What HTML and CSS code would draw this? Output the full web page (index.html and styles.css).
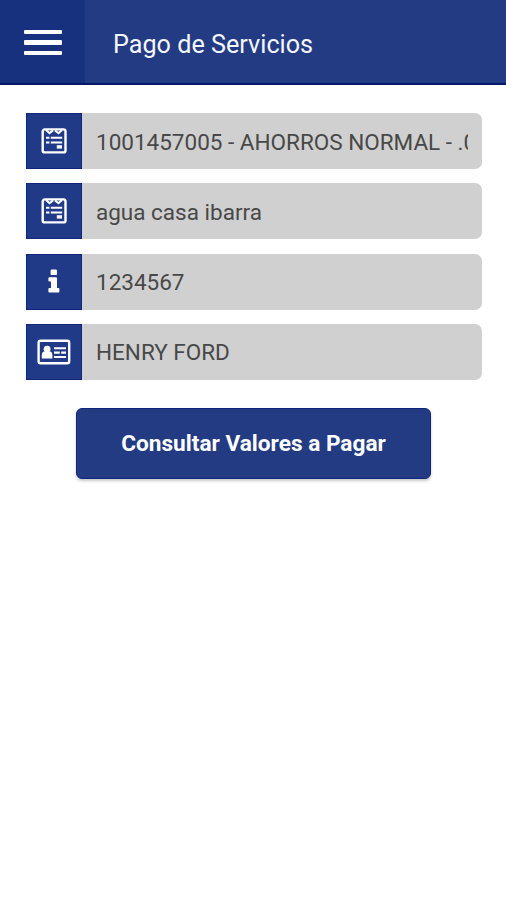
FILE: index.html
```html
<!DOCTYPE html>
<html lang="es">
<head>
<meta charset="utf-8">
<title>Pago de Servicios</title>
<link rel="stylesheet" href="styles.css">
</head>
<body>
<header class="bar">
  <button class="menu" aria-label="Menú"><span class="line"></span><span class="line"></span><span class="line"></span></button>
  <h1 class="title">Pago de Servicios</h1>
</header>
<main class="form">
  <div class="row">
    <div class="addon">
      <svg class="icon" width="34" height="28" viewBox="0 0 34 28"><rect x="5.7" y="2.4" width="22.8" height="23" rx="2" fill="none" stroke="#fff" stroke-width="2.4"/><path d="M9 3l3.5 3.2L16 3.4M18 3.4l3.5 2.8L25 3M9 10.8h3.4M13.8 10.8h11.4M9 15.4h3.4M13.8 15.4h11.4" fill="none" stroke="#fff" stroke-width="2"/><path d="M19.8 18.2h5.2v3.4h-5.2z" fill="#fff"/></svg>
    </div>
    <div class="field"><span class="value">1001457005 - AHORROS NORMAL - .0</span></div>
  </div>
  <div class="row">
    <div class="addon">
      <svg class="icon" width="34" height="28" viewBox="0 0 34 28"><rect x="5.7" y="2.4" width="22.8" height="23" rx="2" fill="none" stroke="#fff" stroke-width="2.4"/><path d="M9 3l3.5 3.2L16 3.4M18 3.4l3.5 2.8L25 3M9 10.8h3.4M13.8 10.8h11.4M9 15.4h3.4M13.8 15.4h11.4" fill="none" stroke="#fff" stroke-width="2"/><path d="M19.8 18.2h5.2v3.4h-5.2z" fill="#fff"/></svg>
    </div>
    <div class="field"><span class="value">agua casa ibarra</span></div>
  </div>
  <div class="row">
    <div class="addon">
      <svg class="icon" width="34" height="28" viewBox="0 0 34 28"><rect x="13.6" y="1.5" width="6.4" height="5.6" rx="1.2" fill="#fff"/><path d="M12.4 9.3h6.6q1 0 1 1v9.8h1.4q1 0 1 1v2.4q0 1-1 1h-9q-1 0-1-1v-2.4q0-1 1-1h1.6v-6.7h-1.6q-1 0-1-1v-2.1q0-1 1-1z" fill="#fff"/></svg>
    </div>
    <div class="field"><span class="value">1234567</span></div>
  </div>
  <div class="row">
    <div class="addon">
      <svg class="icon" width="34" height="28" viewBox="0 0 34 28"><rect x="1.6" y="2.8" width="30.6" height="22.4" rx="2" fill="none" stroke="#fff" stroke-width="2.4"/><path d="M4.8 20.4v-3.2q0-3.4 2.6-3.7h5.4q2.6.3 2.6 3.7v3.2z" fill="#fff"/><circle cx="10.1" cy="11.2" r="3.4" fill="#fff"/><path d="M17 10.2h12M17 14.6h5.8M24.2 14.6h4.8M17 19h12" stroke="#fff" stroke-width="2.1"/></svg>
    </div>
    <div class="field"><span class="value">HENRY FORD</span></div>
  </div>
  <button class="submit">Consultar Valores a Pagar</button>
</main>
</body>
</html>
```
FILE: styles.css
```css
* { box-sizing: border-box; }
body {
  margin: 0;
  min-height: 900px;
  background: #fff;
  font-family: Roboto, "Liberation Sans", sans-serif;
}
.bar {
  display: flex;
  height: 85px;
  background: #233b83;
  border-bottom: 2px solid #061669;
}
.menu {
  display: flex;
  flex-direction: column;
  gap: 6px;
  width: 85px;
  height: 83px;
  padding: 30px 0 0 24px;
  border: 0;
  background: #17317e;
}
.line {
  width: 38px;
  height: 4.4px;
  border-radius: 1px;
  background: #fff;
}
.title {
  margin: 0;
  padding: 3px 0 0 28px;
  color: #f4f6ff;
  font-size: 25.2px;
  font-weight: 400;
  line-height: 83px;
}
.form {
  display: flex;
  flex-direction: column;
  gap: 14.3px;
  padding: 28px 24.5px 0 25.5px;
}
.row {
  display: flex;
  height: 56px;
}
.addon {
  display: flex;
  align-items: center;
  justify-content: center;
  width: 56.5px;
  background: #203a88;
  border: 1px solid #10267c;
}
.icon { display: block; }
.field {
  flex: 1;
  min-width: 0;
  padding: 0 14px;
  border-radius: 0 7px 7px 0;
  background: #d0d0d0;
}
.value {
  display: block;
  overflow: hidden;
  padding-top: 1.5px;
  color: #484848;
  font-size: 22.5px;
  line-height: 54px;
  white-space: nowrap;
}
.submit {
  align-self: center;
  width: 355px;
  height: 71px;
  margin-top: 14px;
  padding: 0;
  border: 1px solid #10267c;
  border-radius: 6px;
  background: #233b83;
  box-shadow: 0 2px 3px rgba(0, 0, 0, .22);
  color: #fff;
  font: 700 22.65px Roboto, "Liberation Sans", sans-serif;
}
```
